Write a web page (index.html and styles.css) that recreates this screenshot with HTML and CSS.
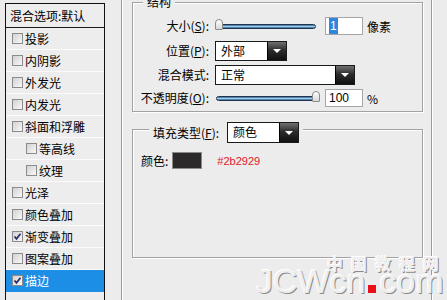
FILE: index.html
```html
<!DOCTYPE html>
<html lang="zh-CN">
<head>
  <meta charset="UTF-8" />
  <meta name="viewport" content="width=device-width, initial-scale=1.0" />
  <title>图层样式 - 描边</title>
  <link rel="stylesheet" href="styles.css">
</head>
<body>
  <div class="dialog">
    <ul class="style-list">
      <li class="style-head">混合选项:默认</li>
      <li class="style-item"><span class="check"></span>投影</li>
      <li class="style-item"><span class="check"></span>内阴影</li>
      <li class="style-item"><span class="check"></span>外发光</li>
      <li class="style-item"><span class="check"></span>内发光</li>
      <li class="style-item"><span class="check"></span>斜面和浮雕</li>
      <li class="style-item sub"><span class="check"></span>等高线</li>
      <li class="style-item sub"><span class="check"></span>纹理</li>
      <li class="style-item"><span class="check"></span>光泽</li>
      <li class="style-item"><span class="check"></span>颜色叠加</li>
      <li class="style-item"><span class="check"><svg viewBox="0 0 9 9" width="9" height="9"><path d="M1.5 4.5 L3.5 6.8 L7.5 1.8" fill="none" stroke="#2b2b66" stroke-width="1.7"/></svg></span>渐变叠加</li>
      <li class="style-item"><span class="check"></span>图案叠加</li>
      <li class="style-item selected"><span class="check"><svg viewBox="0 0 9 9" width="9" height="9"><path d="M1.5 4.5 L3.5 6.8 L7.5 1.8" fill="none" stroke="#2b2b66" stroke-width="1.7"/></svg></span>描边</li>
    </ul>

    <section class="stroke-group">
      <!-- 结构 -->
      <div class="box box-structure">
        <div class="box-title">结构</div>
        <div class="form-grid">
          <label>大小(<u>S</u>):</label>
          <div class="field">
            <div class="slider"><span class="thumb thumb-left"></span></div>
            <div class="num-input"><span class="sel">1</span></div>
            <span class="unit">像素</span>
          </div>

          <label>位置(<u>P</u>):</label>
          <div class="field">
            <div class="select select-short"><span class="select-value">外部</span><span class="select-btn"></span></div>
          </div>

          <label>混合模式:</label>
          <div class="field">
            <div class="select select-long"><span class="select-value">正常</span><span class="select-btn"></span></div>
          </div>

          <label>不透明度(<u>O</u>):</label>
          <div class="field">
            <div class="slider"><span class="thumb thumb-right"></span></div>
            <div class="num-input">100</div>
            <span class="unit">%</span>
          </div>
        </div>
      </div>

      <!-- 填充类型 -->
      <div class="box box-fill">
        <div class="box-title fill-title">
          <label>填充类型(<u>F</u>):</label>
          <div class="select select-short select-fill"><span class="select-value">颜色</span><span class="select-btn"></span></div>
        </div>
        <div class="color-row">
          <span>颜色:</span>
          <span class="swatch" style="background: #2b2929;"></span>
          <span class="hex">#2b2929</span>
        </div>
      </div>
    </section>

    <div class="watermark">
      <div class="wm-cn">中国教程网</div>
      <div class="wm-en">JCWcn<span class="wm-dot"></span>com</div>
    </div>
  </div>
</body>
</html>
```

FILE: styles.css
```css
* { box-sizing: border-box; }
body { margin: 0; width: 447px; height: 300px; overflow: hidden; background: #ececec; color: #000; font: 12px "Noto Sans CJK SC", "Liberation Sans", sans-serif; }
.dialog { position: relative; display: flex; align-items: flex-start; height: 300px; padding-left: 5px; }

/* 样式列表 */
.style-list { list-style: none; margin: 3px 0 0; padding: 0; width: 100px; height: 297px; border: 1px solid #111; border-bottom: none; background: #ededed; }
.style-head { height: 24px; line-height: 23px; padding-left: 4px; border-bottom: 1px solid #1a1a1a; }
.style-item { display: flex; align-items: center; gap: 2px; height: 22px; padding-left: 6px; border-bottom: 1px solid #fbfbfb; line-height: 21px; }
.style-item.sub { padding-left: 20px; }
.style-item.selected { background: #1c8ee6; color: #fff; border-bottom-color: #1c8ee6; }
.check { display: flex; align-items: center; justify-content: center; width: 11px; height: 11px; border: 1px solid #8c8c8c; background: linear-gradient(135deg, #d2d2d2, #f8f8f8); }

/* 描边 分组 */
.stroke-group { width: 311px; height: 300px; margin-left: 16px; padding: 0 8px 0 10px; border-left: 1px solid #9c9c9c; border-right: 1px solid #9c9c9c; box-shadow: inset 1px 0 #fff, 1px 0 #fff; }
.box { width: 291px; border: 1px solid #a2a2a2; box-shadow: inset 1px 1px 0 #fff, 1px 1px 0 #fff; }
.box-title { width: fit-content; margin: -9px 0 0 10px; padding: 0 4px; background: #ececec; line-height: 16px; }
.box-structure { margin-top: 2px; height: 110px; }
.box-fill { margin-top: 17px; height: 129px; }

.form-grid { display: grid; grid-template-columns: 76px auto; grid-template-rows: 24px 25px 24px 22px; column-gap: 6px; align-items: center; margin-top: 4px; }
.form-grid label { text-align: right; line-height: 16px; }
.field { display: flex; align-items: center; }

.slider { position: relative; width: 100px; height: 5px; margin-left: 1px; border: 1px solid #1d3550; border-radius: 3px; background: linear-gradient(#2f5b86, #9fd0f2 50%, #2f5b86); }
.thumb { position: absolute; top: -6px; width: 8px; height: 11px; border: 1px solid #8a8a8a; border-radius: 4px 4px 1px 1px; background: linear-gradient(#ffffff, #d8d8d8); }
.thumb-left { left: -2px; }
.thumb-right { right: -5px; }

.num-input { width: 38px; height: 18px; margin-left: 9px; padding-left: 3px; border: 1px solid #a5a5a5; background: #fff; font: 12px/16px "Liberation Sans", sans-serif; }
.sel { display: inline-block; padding: 0 1px; background: #2f86dc; color: #fff; }
.unit { margin-left: 4px; }

.select { display: flex; height: 20px; border: 1px solid #1a1a1a; background: #fff; }
.select-short { width: 72px; }
.select-long { width: 140px; }
.select-fill { height: 21px; }
.select-value { flex: 1; padding-left: 5px; line-height: 18px; }
.select-btn { display: flex; align-items: center; justify-content: center; width: 19px; border-left: 1px solid #000; background: linear-gradient(#707070, #2c2c2c 45%, #111); }
.select-btn::after { content: ""; border-left: 4px solid transparent; border-right: 4px solid transparent; border-top: 4px solid #fff; }

.fill-title { display: flex; align-items: center; gap: 8px; margin: -8px 0 0 16px; }
.color-row { display: flex; align-items: center; height: 17px; margin: 9px 0 0 8px; }
.swatch { width: 30px; height: 17px; margin-left: 4px; border: 1px solid #8a8a8a; }
.hex { margin-left: 15px; color: #e0162b; font: 11px "Liberation Sans", sans-serif; }

/* 水印 */
.watermark { position: absolute; left: 256px; top: 256px; width: 200px; color: #efefef; text-shadow: -1px -1px 0 #fff, 1px 1px 0 #8a8a8a; }
.wm-cn { margin-left: 71px; font-size: 16px; line-height: 14px; letter-spacing: 8px; font-weight: bold; white-space: nowrap; }
.wm-en { margin-top: -6px; font: 34px/34px "Liberation Sans", sans-serif; white-space: nowrap; }
.wm-dot { display: inline-block; width: 8px; height: 8px; margin: 0 4px 0 2px; background: #e8101a; text-shadow: none; }
```
